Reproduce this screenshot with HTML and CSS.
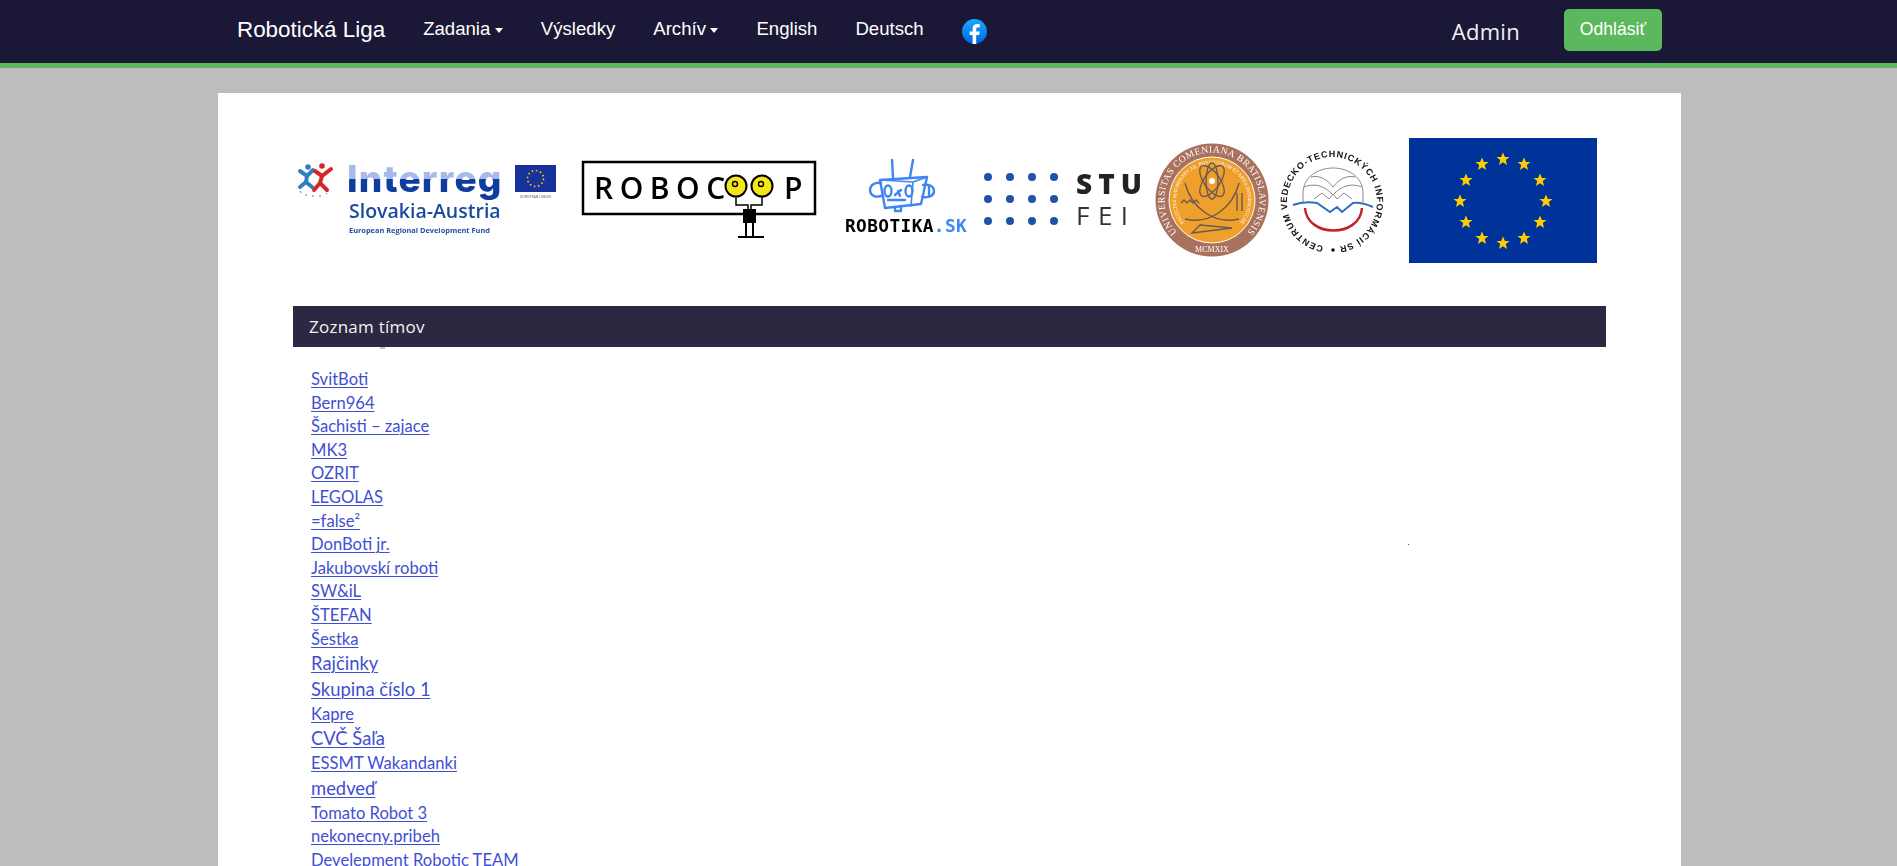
FILE: index.html
```html
<!DOCTYPE html>
<html lang="sk">
<head>
<meta charset="utf-8">
<title>Robotická Liga</title>
<link rel="stylesheet" href="styles.css">
</head>
<body>
<nav class="navbar">
  <a class="brand" href="#">Robotická Liga</a>
  <a class="nav-link" href="#">Zadania<span class="caret"></span></a>
  <a class="nav-link" href="#">Výsledky</a>
  <a class="nav-link" href="#">Archív<span class="caret"></span></a>
  <a class="nav-link" href="#">English</a>
  <a class="nav-link" href="#">Deutsch</a>
  <a class="fb" href="#" aria-label="Facebook">
    <svg width="25" height="25" viewBox="0 0 25 25">
      <defs><linearGradient id="fbg" x1="0" y1="0" x2="0" y2="1"><stop offset="0" stop-color="#18acfe"/><stop offset="1" stop-color="#0163e0"/></linearGradient></defs>
      <circle cx="12.5" cy="12.5" r="12.5" fill="url(#fbg)"/>
      <path d="M10.6 24.9v-9h-3v-3.5h3V9.700c0-3 1.800-4.600 4.500-4.600 1.300 0 2.400.1 2.700.1v3.100h-1.900c-1.400 0-1.700.7-1.700 1.700v2.400h3.500l-.5 3.500h-3v9z" fill="#fff"/>
    </svg>
  </a>
  <div class="nav-right">
    <span class="user">Admin</span>
    <a class="btn-logout" href="#">Odhlásiť</a>
  </div>
</nav>

<main class="sheet">
  <div class="logos">
    <svg class="logo logo-interreg" width="262" height="76" viewBox="0 0 262 76">
      <defs>
        <linearGradient id="ig" x1="0" y1="0" x2="0" y2="1"><stop offset="0.5" stop-color="#a9b9ea"/><stop offset="0.51" stop-color="#0f3c9f"/></linearGradient>
      </defs>
      <g fill="none" stroke-width="4" stroke-linecap="round">
        <path d="M3 9l7 5 6-6M10 14l-1 6-6 5M9 20l6 5" stroke="#2f7fc4"/>
        <path d="M18 9l7 5 9-7M25 14l-2 7 7 7M23 21l-6 7" stroke="#d8232a"/>
      </g>
      <circle cx="11" cy="5" r="2.800" fill="#2f7fc4"/>
      <circle cx="25" cy="4" r="2.800" fill="#d8232a"/>
      <path d="M3 29l1 2M8 33h2M15 34h2M22 34h2M29 32l1-1" stroke="#7fb2dd" stroke-width="1.500" fill="none"/>
      <text class="t-interreg" x="50" y="30" fill="url(#ig)">Interreg</text>
      <text class="t-slovakia" x="52" y="56" fill="#1a4a9f">Slovakia-Austria</text>
      <text class="t-erdf" x="52" y="71" fill="#24519f">European Regional Development Fund</text>
      <rect x="218" y="3" width="41" height="27" fill="#17329a"/>
      <circle cx="238.500" cy="16.500" r="8" fill="none" stroke="#ffcc00" stroke-width="1.600" stroke-dasharray="1.600 2.600"/>
      <text class="t-eu" x="238.500" y="36" fill="#555">EUROPEAN UNION</text>
    </svg>

    <svg class="logo logo-robocoop" width="236" height="80" viewBox="0 0 236 80">
      <rect x="2" y="2" width="232" height="52" fill="#fff" stroke="#000" stroke-width="2.500"/>
      <text class="t-robocoop" x="13" y="39">ROBOC</text>
      <text class="t-robocoop" x="203" y="39">P</text>
      <path d="M155 36v9h12v8M181 36v9h-11v8" fill="none" stroke="#000" stroke-width="1.500"/>
      <circle cx="155" cy="26" r="10.500" fill="#f5e619" stroke="#000" stroke-width="2"/>
      <circle cx="181" cy="26" r="10.500" fill="#f5e619" stroke="#000" stroke-width="2"/>
      <circle cx="154" cy="24" r="2.500" fill="none" stroke="#000" stroke-width="1.400"/>
      <circle cx="180" cy="24" r="2.500" fill="none" stroke="#000" stroke-width="1.400"/>
      <rect x="162" y="49" width="13" height="14" fill="#000"/>
      <path d="M165 62v15M172 62v15M157 77h26" fill="none" stroke="#000" stroke-width="2"/>
    </svg>

    <svg class="logo logo-robotika" width="124" height="80" viewBox="0 0 124 80">
      <g transform="translate(0 2)" fill="none" stroke="#3f86f2" stroke-width="2.400" stroke-linejoin="round" stroke-linecap="round">
        <path d="M47 3l1 17M68 3l-3 17"/>
        <path d="M35 23l47-3-6 27-36 4z"/>
        <path d="M35 23l33 2 14-5M68 25l-2 24" stroke-width="1.600"/>
        <path d="M36 26c-6-1-11 2-11 7s5 8 11 6"/>
        <path d="M78 28c6-1 11 1 11 6s-5 7-12 6M84 29v10"/>
        <ellipse cx="43" cy="34" rx="3.500" ry="5.500"/>
        <ellipse cx="64" cy="34" rx="3.500" ry="5.500"/>
        <path d="M50 38l6-5M53 34l2 5M43 43h17M50 50v4h6v-5"/>
      </g>
      <text class="t-robotika" x="0" y="77" fill="#000">ROBOTIKA<tspan fill="#3f86f2">.SK</tspan></text>
    </svg>

    <svg class="logo logo-stu" width="162" height="56" viewBox="0 0 162 56">
      <g fill="#2251ac">
        <circle cx="4" cy="4" r="4"/><circle cx="26" cy="4" r="4"/><circle cx="48" cy="4" r="4"/><circle cx="70" cy="4" r="4"/>
        <circle cx="4" cy="26" r="4"/><circle cx="26" cy="26" r="4"/><circle cx="48" cy="26" r="4"/><circle cx="70" cy="26" r="4"/>
        <circle cx="4" cy="48" r="4"/><circle cx="26" cy="48" r="4"/><circle cx="48" cy="48" r="4"/><circle cx="70" cy="48" r="4"/>
      </g>
      <text class="t-stu" x="92" y="21" fill="#222">STU</text>
      <text class="t-fei" x="92" y="52" fill="#333">FEI</text>
    </svg>

    <svg class="logo logo-uk" width="114" height="114" viewBox="0 0 114 114">
      <defs>
        <path id="ukarc" d="M56.900 104.500A47.500 47.500 0 1 1 57 104.500"/>
        <path id="ukin" d="M56.900 93A36 36 0 1 1 57 93"/>
      </defs>
      <circle cx="57" cy="57" r="56.500" fill="#a8725f"/>
      <circle cx="57" cy="57" r="43" fill="#ef9f2c" stroke="#fff" stroke-width="1"/>
      <text class="t-uk"><textPath href="#ukarc" startOffset="50%" text-anchor="middle">UNIVERSITAS COMENIANA BRATISLAVENSIS</textPath></text>
      <text class="t-uk-in"><textPath href="#ukin" startOffset="50%" text-anchor="middle">FACULTAS MATHEMATICAE, PHYSICORUM ET ARTIS INFORMATICAE</textPath></text>
      <text class="t-uk-y" x="57" y="109">MCMXIX</text>
      <g fill="none" stroke="#6b5a50" stroke-width="1.400">
        <ellipse cx="57" cy="38" rx="8" ry="18" transform="rotate(35 57 38)"/>
        <ellipse cx="57" cy="38" rx="8" ry="18" transform="rotate(-35 57 38)"/>
        <ellipse cx="57" cy="38" rx="6" ry="18"/>
        <path d="M30 40c6 24 28 42 54 36M84 40c-6 24-28 42-54 36M26 60l3-3 3 3 3-3 3 3 3-3 3 3M45 82l-8 8 40-5zM45 82l32 3"/>
        <path d="M82 50v18M87 50v18"/>
      </g>
      <circle cx="57" cy="38" r="3" fill="#fff"/>
    </svg>

    <svg class="logo logo-cvti" width="108" height="110" viewBox="0 0 108 110">
      <defs>
        <path id="cvarc" d="M53.900 100A45 45 0 1 1 54 100"/>
      </defs>
      <text class="t-cv"><textPath href="#cvarc" startOffset="3%" textLength="266">CENTRUM VEDECKO-TECHNICKÝCH INFORMÁCIÍ SR</textPath></text>
      <circle cx="55" cy="103" r="1.800" fill="#111"/>
      <g fill="none">
        <path d="M25 55V46C25 30 40 21 55 21S85 30 85 46v9" stroke="#888" stroke-width="1"/>
        <path d="M26 40c10-4 20-2 29 8 9-10 19-12 29-8M33 30c8-2 16 2 22 10 6-8 14-12 22-10M36 52l8-6 7 6 4-5 4 5 7-6 8 6" stroke="#888" stroke-width="1"/>
        <path d="M15 58c8-3 17-3 24-2l13 9 7-5 5 5 11-9c7-1 13 1 20 4" stroke="#2f6fc0" stroke-width="2"/>
        <path d="M27 61c2 30 55 30 57 0" stroke="#c4222a" stroke-width="2.500"/>
      </g>
    </svg>

    <svg class="logo logo-eu" width="188" height="125" viewBox="0 0 188 125">
      <defs><path id="star" d="M0-6.500L1.900-2 6.500-2 2.800 1 4 6 0 3.200-4 6-2.800 1-6.500-2-1.900-2z" fill="#ffcc00"/></defs>
      <rect width="188" height="125" fill="#003399"/>
      <use href="#star" x="94" y="21"/><use href="#star" x="115" y="26"/><use href="#star" x="131" y="42"/>
      <use href="#star" x="137" y="63"/><use href="#star" x="131" y="84"/><use href="#star" x="115" y="100"/>
      <use href="#star" x="94" y="105"/><use href="#star" x="73" y="100"/><use href="#star" x="57" y="84"/>
      <use href="#star" x="51" y="63"/><use href="#star" x="57" y="42"/><use href="#star" x="73" y="26"/>
    </svg>
  </div>

  <div class="panel">
    <h2 class="panel-title">Zoznam tímov</h2>
    <span class="clip-mark"></span>
  </div>

  <div class="teams">
    <a class="team" href="#">SvitBoti</a>
    <a class="team" href="#">Bern964</a>
    <a class="team" href="#">Šachisti – zajace</a>
    <a class="team" href="#">MK3</a>
    <a class="team" href="#">OZRIT</a>
    <a class="team" href="#">LEGOLAS</a>
    <a class="team" href="#">=false²</a>
    <a class="team" href="#">DonBoti jr.</a>
    <a class="team" href="#">Jakubovskí roboti</a>
    <a class="team" href="#">SW&amp;iL</a>
    <a class="team" href="#">ŠTEFAN</a>
    <a class="team" href="#">Šestka</a>
    <a class="team team-lg" href="#">Rajčinky</a>
    <a class="team team-lg" href="#">Skupina číslo 1</a>
    <a class="team" href="#">Kapre</a>
    <a class="team team-lg" href="#">CVČ Šaľa</a>
    <a class="team" href="#">ESSMT Wakandanki</a>
    <a class="team team-lg" href="#">medveď</a>
    <a class="team" href="#">Tomato Robot 3</a>
    <a class="team" href="#">nekonecny.pribeh</a>
    <a class="team" href="#">Develepment Robotic TEAM</a>
    <span class="speck"></span>
  </div>
</main>
</body>
</html>
```
FILE: styles.css
```css
html, body {
  margin: 0;
  height: 866px;
  overflow: hidden;
}
body {
  background: #bdbdbd;
  font-family: "Liberation Sans", Arial, sans-serif;
}
.navbar {
  display: flex;
  align-items: center;
  gap: 38px;
  height: 60px;
  padding: 0 235px 3px 237px;
  background: #1a1836;
  border-bottom: 5px solid #5cb85c;
}
.brand, .nav-link {
  color: #fff;
  text-decoration: none;
  white-space: nowrap;
}
.brand { font-size: 22.4px; }
.nav-link {
  padding-bottom: 2px;
  font-size: 18.6px;
}
.caret {
  display: inline-block;
  margin-left: 4.5px;
  vertical-align: middle;
  border-top: 5px solid #fff;
  border-left: 4.75px solid transparent;
  border-right: 4.75px solid transparent;
}
.fb {
  display: flex;
  margin-top: 3px;
}
.nav-right {
  display: flex;
  align-items: center;
  gap: 44px;
  margin-left: auto;
}
.user {
  color: #f1f1f1;
  font-family: "Open Sans", sans-serif;
  font-size: 22px;
  letter-spacing: 0.3px;
  padding-top: 2px;
}
.btn-logout {
  display: flex;
  align-items: center;
  justify-content: center;
  width: 98px;
  height: 42px;
  margin-top: -1px;
  border-radius: 5px;
  background: #5cb85c;
  color: #fff;
  font-size: 17.6px;
  text-decoration: none;
}
.sheet {
  width: 1463px;
  box-sizing: border-box;
  margin: 25px 0 0 218px;
  padding: 44px 75px 0;
  height: 800px;
  background: #fff;
}
.logos {
  display: flex;
  align-items: center;
  height: 126px;
  padding-left: 4px;
}
.logo { flex: none; filter: blur(0.35px); }
.logo-robocoop { margin-left: 22px; }
.logo-robotika { margin-left: 28px; margin-top: -10px; }
.logo-stu { margin-left: 15px; margin-top: 2px; }
.logo-uk { margin-left: 9px; }
.logo-cvti { margin-left: 9px; margin-top: 4px; }
.logo-eu { margin-left: 23px; }
.t-interreg {
  font-family: Inter, sans-serif;
  font-weight: 800;
  font-size: 37px;
  letter-spacing: 1.2px;
}
.t-slovakia {
  font-family: "Open Sans", sans-serif;
  font-weight: 600;
  font-size: 19.5px;
}
.t-erdf {
  font-family: "Open Sans", sans-serif;
  font-weight: 700;
  font-size: 7.4px;
}
.t-eu {
  font-family: "Open Sans", sans-serif;
  font-size: 3.5px;
  text-anchor: middle;
}
.t-robocoop {
  font-family: "Open Sans", sans-serif;
  font-size: 30px;
  font-weight: 600;
  letter-spacing: 6.5px;
}
.t-robotika {
  font-family: "DejaVu Sans Mono", monospace;
  font-weight: 700;
  font-size: 17.8px;
  letter-spacing: 0.4px;
}
.t-stu {
  font-family: "Open Sans", sans-serif;
  font-weight: 800;
  font-size: 28px;
  letter-spacing: 6px;
}
.t-fei {
  font-family: "Open Sans", sans-serif;
  font-size: 26px;
  letter-spacing: 8.5px;
}
.t-uk {
  font-family: "Liberation Serif", serif;
  font-size: 9.5px;
  letter-spacing: 0.5px;
  fill: #fff;
}
.t-uk-in {
  font-family: "Liberation Serif", serif;
  font-size: 5px;
  fill: #fff;
}
.t-uk-y {
  font-family: "Liberation Serif", serif;
  font-size: 8px;
  text-anchor: middle;
  fill: #fff;
}
.t-cv {
  font-family: "Liberation Sans", sans-serif;
  font-weight: 700;
  font-size: 9px;
  fill: #111;
}
.panel {
  position: relative;
  margin-top: 43px;
}
.panel-title {
  height: 41px;
  margin: 0;
  padding: 0 0 0 16px;
  background: #2d2742;
  color: #f2f2f2;
  font-family: "Open Sans", sans-serif;
  font-size: 17px;
  font-weight: 400;
  letter-spacing: 0.25px;
  line-height: 41px;
}
.clip-mark {
  position: absolute;
  left: 87px;
  top: 41px;
  width: 5px;
  height: 2px;
  background: #b9bce0;
}
.speck {
  position: absolute;
  left: 1408px;
  top: 544px;
  width: 1px;
  height: 1px;
  background: #555;
}
.teams {
  display: flex;
  flex-direction: column;
  align-items: flex-start;
  padding: 21px 0 0 18px;
}
.team {
  font-family: Lato, sans-serif;
  font-size: 16.6px;
  line-height: 23.6px;
  color: #3f4fd3;
  text-decoration: underline;
  text-decoration-thickness: 1px;
  text-underline-offset: 2px;
}
.team-lg {
  font-size: 18.4px;
  line-height: 25.8px;
}
```
